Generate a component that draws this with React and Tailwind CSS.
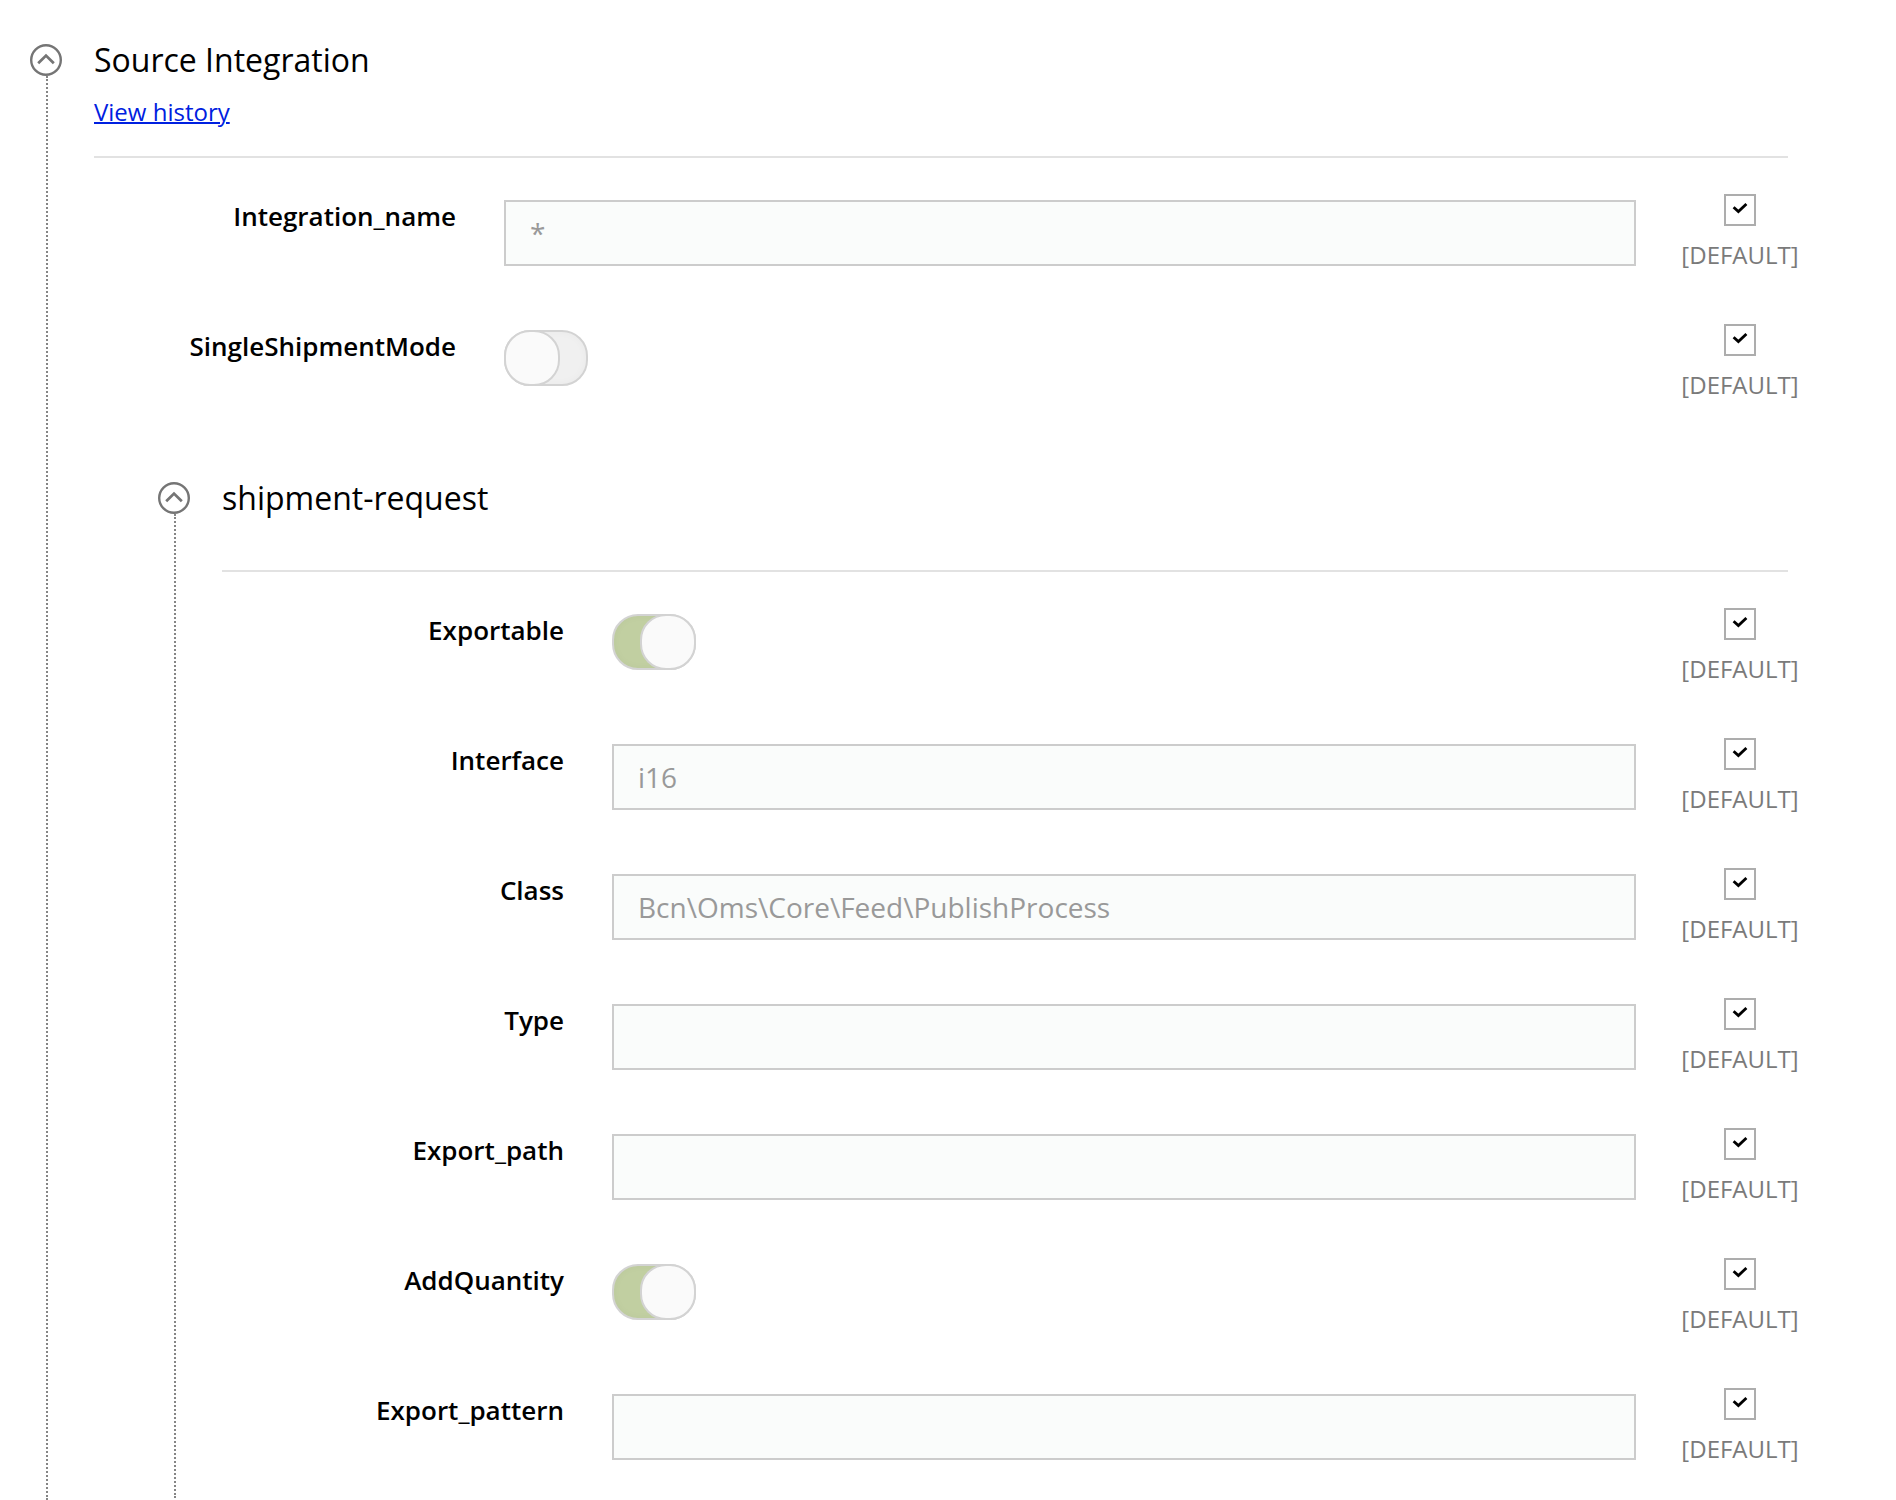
import { useState } from "react";

const sourceFields = [
	{ name: "Integration_name", type: "text", value: "*" },
	{ name: "SingleShipmentMode", type: "toggle", value: false },
];

const shipmentFields = [
	{ name: "Exportable", type: "toggle", value: true },
	{ name: "Interface", type: "text", value: "i16" },
	{ name: "Class", type: "text", value: "Bcn\\Oms\\Core\\Feed\\PublishProcess" },
	{ name: "Type", type: "text", value: "" },
	{ name: "Export_path", type: "text", value: "" },
	{ name: "AddQuantity", type: "toggle", value: true },
	{ name: "Export_pattern", type: "text", value: "" },
];

function Toggle({ id, checked, disabled, onChange }) {
	return (
		<span className="relative block h-14 w-21">
			<input
				id={id}
				type="checkbox"
				role="switch"
				checked={checked}
				disabled={disabled}
				onChange={(e) => onChange(e.target.checked)}
				className="peer block h-14 w-21 appearance-none rounded-[26px] border-2 border-[#d3d3d3] bg-[#f0f0f0] shadow-[inset_0_0_8px_rgba(0,0,0,0.03)] checked:bg-[#c1cfa1]"
			/>
			<span className="pointer-events-none absolute top-0 left-0 size-14 rounded-[26px] border-2 border-[#d3d3d3] bg-[#fafafa] peer-checked:left-7" />
		</span>
	);
}

function Field({ field, labelWidth }) {
	const [value, setValue] = useState(field.value);
	const [useDefault, setUseDefault] = useState(true);
	const id = field.name.toLowerCase();

	return (
		<div className="flex items-start">
			<label
				htmlFor={id}
				className={`${labelWidth} mr-12 shrink-0 pt-1 text-right text-[26px] leading-9 font-semibold`}
			>
				{field.name}
			</label>

			<div className="min-w-0 flex-1 pt-1.5">
				{field.type === "toggle" ? (
					<Toggle
						id={id}
						checked={value}
						disabled={useDefault}
						onChange={setValue}
					/>
				) : (
					<input
						id={id}
						type="text"
						value={value}
						disabled={useDefault}
						onChange={(e) => setValue(e.target.value)}
						className="block h-[66px] w-full border-2 border-[#cccccc] bg-[#fafcfb] px-6 text-[28px] text-[#999999]"
					/>
				)}
			</div>

			<label className="flex w-52 shrink-0 flex-col items-center gap-3 text-2xl leading-[34px] text-[#7a7a7a]">
				<span className="relative block size-8">
					<input
						type="checkbox"
						checked={useDefault}
						onChange={(e) => setUseDefault(e.target.checked)}
						className="peer block size-8 appearance-none border-2 border-[#adadad] bg-white"
					/>
					<svg
						viewBox="0 0 32 32"
						className="pointer-events-none absolute inset-0 hidden size-8 text-black peer-checked:block"
						fill="none"
						stroke="currentColor"
						strokeWidth="2.8"
					>
						<path d="M9.6 13.2l4.8 4.4 8-7.7" />
					</svg>
				</span>
				[DEFAULT]
			</label>
		</div>
	);
}

function Section({ title, link, fields, labelWidth, children }) {
	const [open, setOpen] = useState(true);

	return (
		<section className="flex gap-8">
			{/* Collapse button and the dotted line under it */}
			<div className="flex w-8 shrink-0 flex-col">
				<button
					type="button"
					aria-label={title}
					aria-expanded={open}
					onClick={() => setOpen(!open)}
					className="size-8 text-[#757575]"
				>
					<svg
						viewBox="0 0 32 32"
						className={open ? "size-8" : "size-8 rotate-180"}
						fill="none"
						stroke="currentColor"
					>
						<circle cx="16" cy="16" r="14.8" strokeWidth="2.4" />
						<path d="M8.2 19.2L16 11.6l7.8 7.6" strokeWidth="2.8" />
					</svg>
				</button>
				<div className="ml-4 flex-1 border-l-2 border-dotted border-[#858585]" />
			</div>

			<div className="min-w-0 flex-1">
				<div className="mr-14 border-b-2 border-[#e2e2e2]">
					<h2 className="text-[32px] leading-8">{title}</h2>
					{link ? (
						<p className="pt-4 pb-6 text-2xl leading-10">
							<a
								href="#history"
								className="text-[#0020e0] underline decoration-2"
							>
								{link}
							</a>
						</p>
					) : (
						<div className="h-14" />
					)}
				</div>
				{open && (
					<>
						<div className="flex flex-col gap-[52px] pt-9">
							{fields.map((field) => (
								<Field key={field.name} field={field} labelWidth={labelWidth} />
							))}
						</div>
						{children}
					</>
				)}
			</div>
		</section>
	);
}

export default function App() {
	return (
		<main className="flex min-h-screen flex-col bg-white pt-11 pr-[52px] pl-[30px] font-['Open_Sans',sans-serif] text-black *:flex-1">
			<Section
				title="Source Integration"
				link="View history"
				fields={sourceFields}
				labelWidth="w-[362px]"
			>
				<div className="pt-20 pl-16">
					<Section
						title="shipment-request"
						fields={shipmentFields}
						labelWidth="w-[342px]"
					>
						<div className="h-8" />
					</Section>
				</div>
			</Section>
		</main>
	);
}
